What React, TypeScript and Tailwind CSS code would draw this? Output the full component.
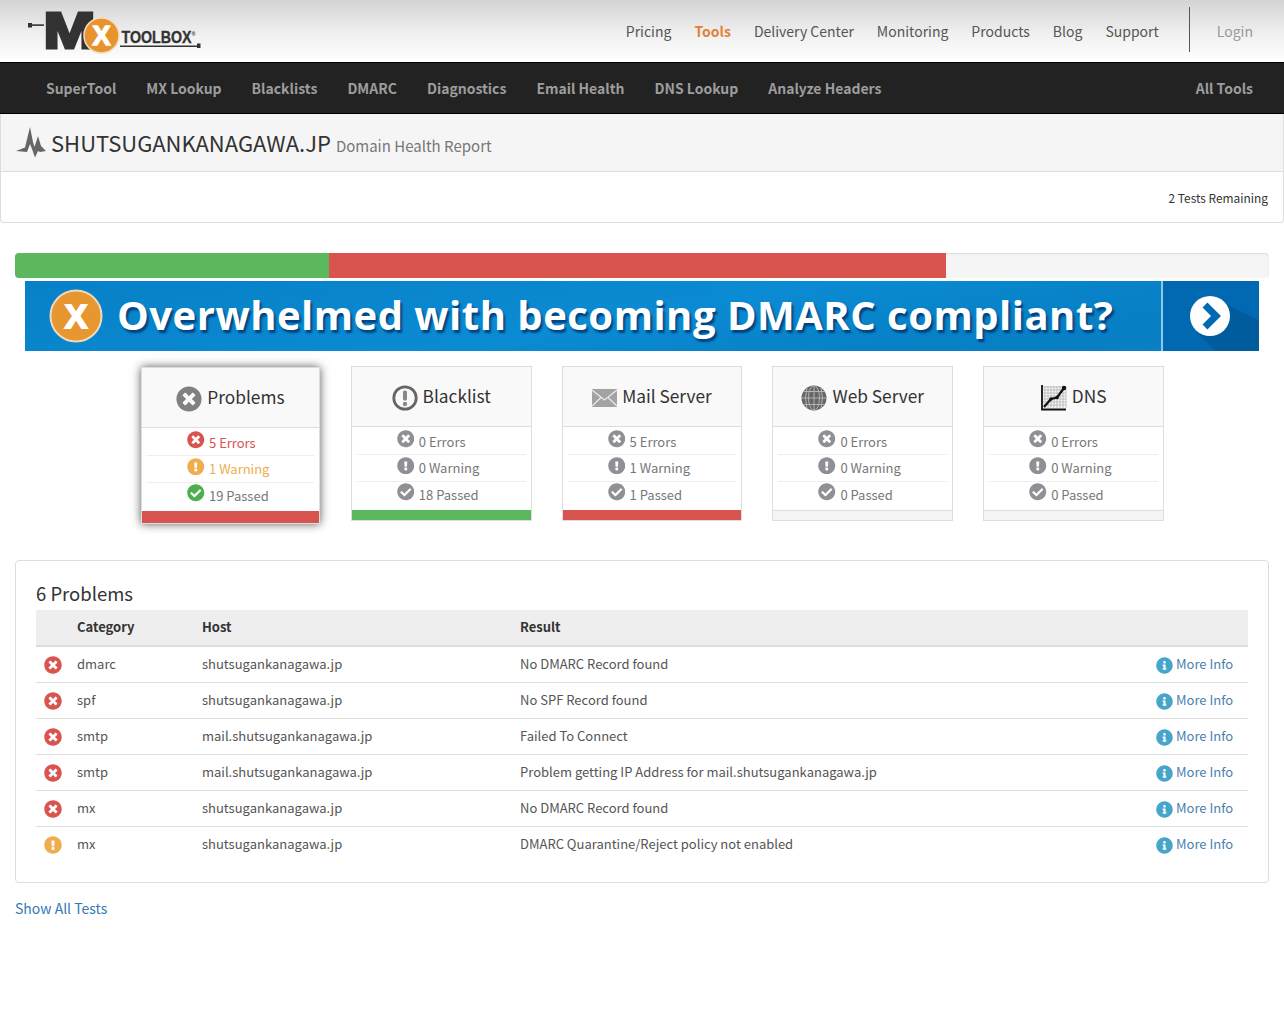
import React from "react";
import { FaTimesCircle, FaExclamationCircle, FaCheckCircle, FaInfoCircle } from "react-icons/fa";

const font = "font-['Noto_Sans_CJK_JP','Noto_Sans',sans-serif]";

function Logo() {
  return (
    <svg width="176" height="50" viewBox="0 0 176 50" className="block overflow-visible">
      <rect x="0" y="19" width="4" height="4.5" fill="#333" />
      <rect x="3" y="20.3" width="13" height="1.6" fill="#333" />
      <text x="15.5" y="43.5" fontFamily="Liberation Sans" fontWeight="700" fontSize="50" textLength="52" lengthAdjust="spacingAndGlyphs" fill="#333" stroke="#333" strokeWidth="3">M</text>
      <circle cx="73.5" cy="31.5" r="17.5" fill="#e8942e" stroke="#f2dcc0" strokeWidth="1.5" />
      <text x="73.5" y="41" textAnchor="middle" fontFamily="Liberation Sans" fontWeight="700" fontSize="27" fill="#fff" stroke="#fff" strokeWidth="1.4">X</text>
      <text x="93.5" y="38.5" fontFamily="Liberation Sans" fontWeight="700" fontSize="16" textLength="74" lengthAdjust="spacingAndGlyphs" fill="#333" stroke="#333" strokeWidth="0.35">
        TOOLBOX<tspan fontSize="6" dy="-7" strokeWidth="0">®</tspan>
      </text>
      <rect x="92" y="41.5" width="78" height="1.5" fill="#333" />
      <rect x="169" y="39.5" width="3.5" height="4.5" fill="#333" />
    </svg>
  );
}

function Pulse() {
  return (
    <svg width="30" height="31" viewBox="0 0 30 31" className="block">
      <path d="M0 24 L9 20.5 L14 0 L17 15 L18.5 20 L22 9 L25 19 L30 24 L24 25 L22 24 L19 30.5 L16 22 L14 17 L11 25 Z" fill="#666" />
    </svg>
  );
}

function RingBang() {
  return (
    <svg width="26" height="26" viewBox="0 0 26 26" className="mt-[2px] block">
      <circle cx="13" cy="13" r="11.2" fill="none" stroke="#666" strokeWidth="2.8" />
      <rect x="11" y="5.5" width="4" height="10" rx="1.5" fill="#888" />
      <circle cx="13" cy="19" r="2.2" fill="#888" />
    </svg>
  );
}

function Mail() {
  return (
    <svg width="25" height="18" viewBox="0 0 25 18" className="mt-[3px] block">
      <rect width="25" height="18" fill="#a3a3a3" />
      <path d="M0 1 L12.5 11 L25 1 M0 17 L9 8.5 M25 17 L16 8.5" fill="none" stroke="#eee" strokeWidth="1.2" />
    </svg>
  );
}

function Globe() {
  return (
    <svg width="26" height="26" viewBox="0 0 26 26" className="mt-[2px] block">
      <circle cx="13" cy="13" r="12.5" fill="#666" />
      <g fill="none" stroke="#bbb" strokeWidth="0.9">
        <ellipse cx="13" cy="13" rx="5.5" ry="12.5" />
        <path d="M13 .5 V25.5 M.5 13 H25.5 M2.5 6.5 H23.5 M2.5 19.5 H23.5 M6 2.5 Q3 13 6 23.5 M20 2.5 Q23 13 20 23.5" />
      </g>
    </svg>
  );
}

function Chart() {
  return (
    <svg width="26" height="26" viewBox="0 0 26 26" className="mt-[2px] block">
      <g stroke="#aaa" strokeWidth="0.7">
        <path d="M4 1V23M7 1V23M10 1V23M13 1V23M16 1V23M19 1V23M22 1V23M25 1V23M2 2H25M2 5H25M2 8H25M2 11H25M2 14H25M2 17H25M2 20H25" />
      </g>
      <path d="M1 0 V24.5 H25" fill="none" stroke="#111" strokeWidth="1.8" />
      <path d="M3 22 L10 14 L16 12.5 L23 3" fill="none" stroke="#111" strokeWidth="2.2" />
      <circle cx="23" cy="3" r="2.2" fill="#111" />
      <circle cx="10" cy="14" r="1.8" fill="#111" />
      <circle cx="16" cy="12.5" r="1.8" fill="#111" />
    </svg>
  );
}

function StatRow({ kind, label, tone, cls }: { kind: "e" | "w" | "p"; label: string; tone: "gray" | "color"; cls: string }) {
  const Icon = kind === "e" ? FaTimesCircle : kind === "w" ? FaExclamationCircle : FaCheckCircle;
  const iconColor =
    tone === "gray" ? "text-[#8f8f95]" : kind === "e" ? "text-[#d9534f]" : kind === "w" ? "text-[#f0ad4e]" : "text-[#4cae4c]";
  const textColor =
    tone === "gray" ? "text-[#777]" : kind === "e" ? "text-[#d9534f]" : kind === "w" ? "text-[#f0ad4e]" : "text-[#777]";
  return (
    <div className={`flex items-center gap-[4.5px] pl-[40px] ${cls}`}>
      <Icon className={`${iconColor} -mt-[5px] shrink-0 text-[17.5px]`} />
      <span className={`${textColor} text-[13px] leading-[18px]`}>{label}</span>
    </div>
  );
}

type Card = { title: string; icon: React.ReactNode; e: string; w: string; p: string; bar: string; active?: boolean };

const cards: Card[] = [
  { title: "Problems", icon: <FaTimesCircle className="mt-[3px] text-[26px] text-[#808080]" />, e: "5 Errors", w: "1 Warning", p: "19 Passed", bar: "bg-[#d9534f]", active: true },
  { title: "Blacklist", icon: <RingBang />, e: "0 Errors", w: "0 Warning", p: "18 Passed", bar: "bg-[#5cb85c]" },
  { title: "Mail Server", icon: <Mail />, e: "5 Errors", w: "1 Warning", p: "1 Passed", bar: "bg-[#d9534f]" },
  { title: "Web Server", icon: <Globe />, e: "0 Errors", w: "0 Warning", p: "0 Passed", bar: "bg-[#f5f5f5] border-t border-[#ddd]" },
  { title: "DNS", icon: <Chart />, e: "0 Errors", w: "0 Warning", p: "0 Passed", bar: "bg-[#f5f5f5] border-t border-[#ddd]" },
];

function StatCard({ c }: { c: Card }) {
  const tone = c.active ? "color" : "gray";
  return (
    <div
      className={`flex flex-col border border-[#ddd] bg-white ${
        c.active ? "mx-[1px] mt-px h-[157px] shadow-[0_0_9px_rgba(0,0,0,0.65)]" : "h-[155px]"
      }`}
    >
      <div className="flex h-[60px] items-center justify-center gap-[5px] border-b border-[#ddd] bg-[#f9f9f9]">
        {c.icon}
        <span className="-mt-[2px] text-[17.3px] leading-[26px] text-[#333]">{c.title}</span>
      </div>
      <div className="mx-[5px] flex flex-col">
        <StatRow kind="e" label={c.e} tone={tone} cls="h-[28px] border-b border-[#eee] pt-[2px]" />
        <StatRow kind="w" label={c.w} tone={tone} cls="h-[27px] border-b border-[#eee]" />
        <StatRow kind="p" label={c.p} tone={tone} cls="h-[27px] pb-[2px]" />
      </div>
      <div className={`mt-auto shrink-0 ${c.active ? "h-[12px]" : "h-[10px]"} ${c.bar}`} />
    </div>
  );
}

const rows = [
  ["e", "dmarc", "shutsugankanagawa.jp", "No DMARC Record found"],
  ["e", "spf", "shutsugankanagawa.jp", "No SPF Record found"],
  ["e", "smtp", "mail.shutsugankanagawa.jp", "Failed To Connect"],
  ["e", "smtp", "mail.shutsugankanagawa.jp", "Problem getting IP Address for mail.shutsugankanagawa.jp"],
  ["e", "mx", "shutsugankanagawa.jp", "No DMARC Record found"],
  ["w", "mx", "shutsugankanagawa.jp", "DMARC Quarantine/Reject policy not enabled"],
];

export default function App() {
  return (
    <div className={`${font} min-h-[1014px] bg-white text-[13px] text-[#333]`}>
      <header className="flex h-[62px] items-start justify-between bg-[linear-gradient(#d4d4d4,#f0f0f0_55%,#ffffff)] pl-[28px] pr-[31px]">
        <div className="mt-[4px]">
          <Logo />
        </div>
        <nav className="flex h-full items-center text-[14px] leading-[20px] text-[#555]">
          <div className="flex gap-[23px]">
            <span>Pricing</span>
            <span className="font-bold text-[#e0823a]">Tools</span>
            <span>Delivery Center</span>
            <span>Monitoring</span>
            <span>Products</span>
            <span>Blog</span>
            <span>Support</span>
          </div>
          <div className="ml-[30px] h-[45px] w-px -translate-y-[2px] bg-[#555]" />
          <span className="ml-[27px] text-[#999]">Login</span>
        </nav>
      </header>

      <nav className="flex h-[52px] items-center justify-between border-y border-black bg-[#222] pl-[46px] pr-[31px] text-[13.97px] font-bold leading-[20px] text-[#9d9d9d]">
        <div className="flex gap-[30px]">
          {["SuperTool", "MX Lookup", "Blacklists", "DMARC", "Diagnostics", "Email Health", "DNS Lookup", "Analyze Headers"].map((t) => (
            <span key={t}>{t}</span>
          ))}
        </div>
        <span>All Tools</span>
      </nav>

      <section className="rounded-b-[4px] border border-t-0 border-[#ddd] bg-white">
        <div className="flex h-[58px] items-center gap-[5px] border-b border-[#ddd] bg-[#f5f5f5] pl-[15px]">
          <Pulse />
          <span className="-mt-[2px] text-[22px] leading-[30px] text-[#333]">SHUTSUGANKANAGAWA.JP</span>
          <span className="mt-[6px] text-[15px] leading-[22px] text-[#777]">Domain Health Report</span>
        </div>
        <div className="flex h-[50px] items-center justify-end pr-[15px] pt-[1px] text-[11.9px] text-[#333]">2 Tests Remaining</div>
      </section>

      <div className="mx-[15px] mt-[30px] flex h-[25px] overflow-hidden rounded-[4px] bg-[#f5f5f5] shadow-[inset_0_1px_2px_rgba(0,0,0,0.1)]">
        <div className="w-[314px] bg-[#5cb85c]" />
        <div className="w-[617px] bg-[#d9534f]" />
      </div>

      <div className="relative mx-[25px] mt-[3px] flex h-[70px] overflow-hidden bg-[linear-gradient(170deg,#0780c6_0%,#0b8bd3_50%,#0780c6_75%,#0a7fc4_100%)]">
        <div className="flex flex-1 items-center pl-[24px]">
          <svg width="54" height="54" viewBox="0 0 54 54" className="block shrink-0">
            <circle cx="27" cy="27" r="25.5" fill="#e8962f" stroke="#eed9be" strokeWidth="2" />
            <text x="27" y="39" textAnchor="middle" fontFamily="Liberation Sans" fontWeight="700" fontSize="34" fill="#fff" stroke="#fff" strokeWidth="1.8">X</text>
          </svg>
          <span className="-mt-[2px] ml-[14px] whitespace-nowrap font-['Open_Sans',sans-serif] text-[40px] font-bold leading-[50px] tracking-[0.5px] text-white [text-shadow:2px_3px_2px_rgba(0,50,110,0.8)]">
            Overwhelmed with becoming DMARC compliant?
          </span>
        </div>
        <div className="relative h-full w-[98px] shrink-0 border-l-2 border-[#8cc8ea] bg-[#0169b1]">
          <svg width="96" height="70" viewBox="0 0 96 70" className="block">
            <path d="M32 49 L64 24 L96 39 V70 H52 Z" fill="#015c9e" />
            <circle cx="47" cy="35" r="20" fill="#fff" />
            <path d="M42 24 L53 35 L42 46" fill="none" stroke="#0169b1" strokeWidth="7" />
          </svg>
        </div>
      </div>

      <div className="ml-[140px] mt-[15px] grid w-[1024px] grid-cols-5 gap-x-[30px]">
        {cards.map((c) => (
          <StatCard key={c.title} c={c} />
        ))}
      </div>

      <section className="mx-[15px] mt-[36px] h-[323px] rounded-[4px] border border-[#ddd] bg-white px-[20px] pt-[20px]">
        <h2 className="h-[29px] text-[18.5px] font-normal leading-[25px] text-[#333]">6 Problems</h2>
        <table className="w-full table-fixed border-collapse text-[13px]">
          <colgroup>
            <col className="w-[41px]" />
            <col className="w-[125px]" />
            <col className="w-[318px]" />
            <col className="w-[636px]" />
            <col />
          </colgroup>
          <thead>
            <tr className="h-[36px] border-b-2 border-[#ddd] bg-[#eee] text-left">
              <th />
              <th className="pb-[2px] font-bold">Category</th>
              <th className="pb-[2px] font-bold">Host</th>
              <th className="pb-[2px] font-bold">Result</th>
              <th />
            </tr>
          </thead>
          <tbody className="text-[#555]">
            {rows.map((r, i) => {
              const nudge = i === 0 || i === rows.length - 1 ? "pb-[2px]" : "";
              return (
                <tr key={i} className={`h-[36px] ${i < rows.length - 1 ? "border-b border-[#ddd]" : ""}`}>
                  <td className="pl-[8px]">
                    {r[0] === "e" ? (
                      <FaTimesCircle className="mt-[2px] text-[18px] text-[#d9534f]" />
                    ) : (
                      <FaExclamationCircle className="mt-[2px] text-[18px] text-[#f0ad4e]" />
                    )}
                  </td>
                  <td className={nudge}>{r[1]}</td>
                  <td className={nudge}>{r[2]}</td>
                  <td className={nudge}>{r[3]}</td>
                  <td>
                    <div className="flex items-center gap-[3px] text-[#4a7fb0]">
                      <FaInfoCircle className="mt-[2px] text-[17px] text-[#46a5c9]" />
                      <span className={i === 0 || i === rows.length - 1 ? "-mt-[1px]" : ""}>More Info</span>
                    </div>
                  </td>
                </tr>
              );
            })}
          </tbody>
        </table>
      </section>

      <div className="mx-[15px] mt-[14px] text-[14px] leading-[22px] text-[#337ab7]">Show All Tests</div>
    </div>
  );
}
